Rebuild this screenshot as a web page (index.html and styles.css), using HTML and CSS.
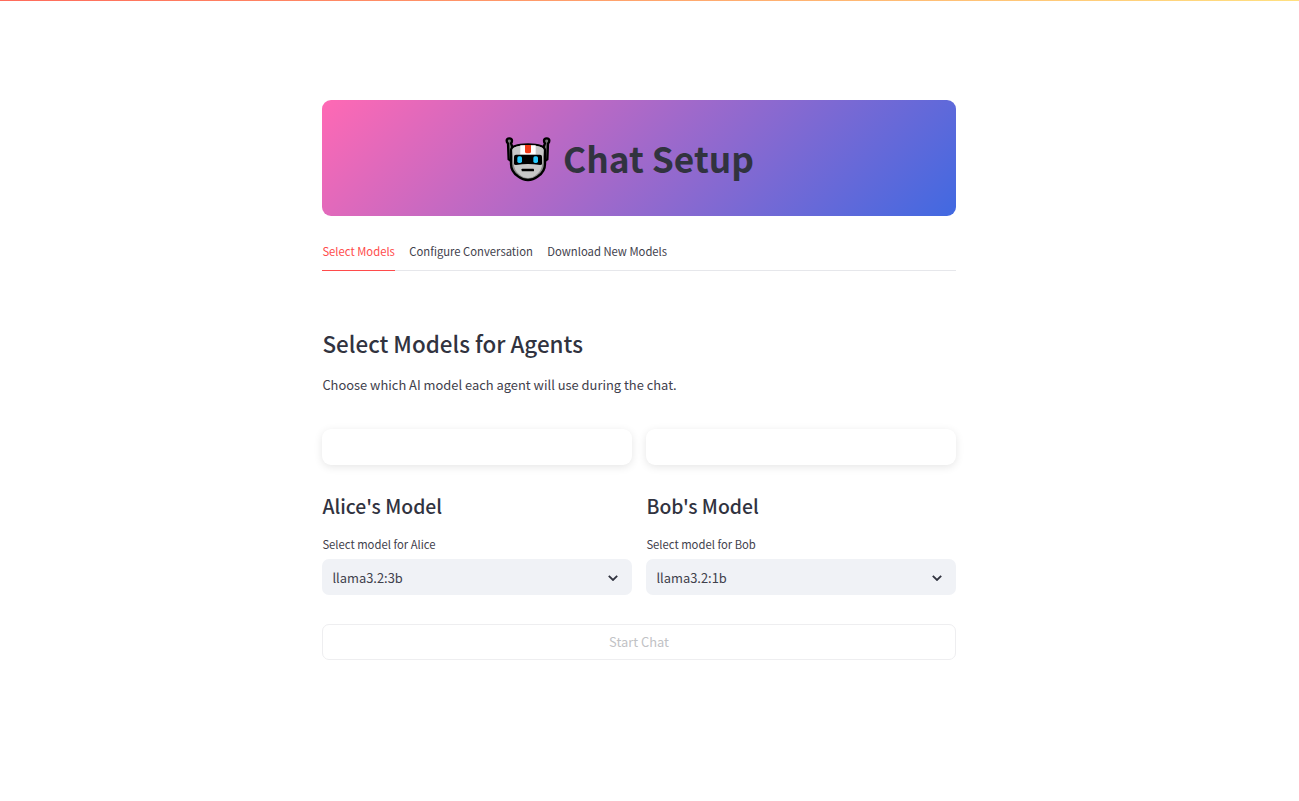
FILE: index.html
```html
<!DOCTYPE html>
<html lang="en">
<head>
<meta charset="utf-8">
<title>Chat Setup</title>
<link rel="stylesheet" href="styles.css">
</head>
<body>
<div class="decoration"></div>
<main class="page">
  <header class="hero">
    <svg class="robot" viewBox="0 0 150 150" aria-hidden="true">
      <path d="M19 13Q27 13 27 20Q27 25 24 28L32 48V86L17 76L15 28Q11 25 11 20Q11 13 19 13Z" fill="#777" stroke="#000" stroke-width="7" stroke-linejoin="round"/>
      <path d="M131 13Q123 13 123 20Q123 25 126 28L118 48V86L133 76L135 28Q139 25 139 20Q139 13 131 13Z" fill="#777" stroke="#000" stroke-width="7" stroke-linejoin="round"/>
      <path d="M24 48Q26 31 75 31Q124 31 126 48V90Q126 113 105 127Q90 138 75 138Q60 138 45 127Q24 113 24 90Z" fill="#8c8c8c" stroke="#000" stroke-width="7"/>
      <path d="M28 49Q30 34 75 34Q120 34 122 49L118 89Q116 109 103 119Q89 132 75 132Q61 132 47 119Q34 109 32 89Z" fill="#c8c8c8"/>
      <path d="M52 34H98V62H52Z" fill="#fff"/>
      <path d="M66 33H84V53Q84 58 75 58T66 53Z" fill="#f03a17"/>
      <path d="M39 62H111Q117 62 117 68V89Q117 93 111 93Q75 87 39 93Q33 93 33 89V68Q33 62 39 62Z" fill="#000"/>
      <rect x="43" y="67" width="14" height="20" rx="5" fill="#26c9fc"/>
      <rect x="91" y="67" width="14" height="20" rx="5" fill="#26c9fc"/>
      <rect x="56" y="104" width="37" height="8" rx="2" fill="#000"/>
    </svg>
    <h1 class="hero-title">Chat Setup</h1>
  </header>
  <nav class="tabs">
    <a class="tab tab-active">Select Models</a>
    <a class="tab">Configure Conversation</a>
    <a class="tab">Download New Models</a>
  </nav>
  <h2 class="section-title">Select Models for Agents</h2>
  <p class="intro">Choose which AI model each agent will use during the chat.</p>
  <div class="agents">
    <section class="agent">
      <div class="card"></div>
      <h3 class="agent-title">Alice's Model</h3>
      <div class="label">Select model for Alice</div>
      <div class="select"><span>llama3.2:3b</span>
        <svg class="chevron" viewBox="0 0 10 6"><path d="M.8 .8L5 5L9.200 .8"/></svg></div>
    </section>
    <section class="agent">
      <div class="card"></div>
      <h3 class="agent-title">Bob's Model</h3>
      <div class="label">Select model for Bob</div>
      <div class="select"><span>llama3.2:1b</span>
        <svg class="chevron" viewBox="0 0 10 6"><path d="M.8 .8L5 5L9.200 .8"/></svg></div>
    </section>
  </div>
  <button class="start" disabled>Start Chat</button>
</main>
</body>
</html>
```
FILE: styles.css
```css
* { box-sizing: border-box; }
body {
  margin: 0;
  background: #fff;
  color: #3f414c;
  font-family: "Noto Sans CJK SC", "Noto Sans", sans-serif;
  font-size: 12.9px;
}
h1, h2, h3, p { margin: 0; }
h1, h2, h3 { color: #31333f; }
.decoration { height: 1px; background: linear-gradient(90deg, #ff6b5b, #ffe080); }
.page { width: 634px; margin: 99px 0 0 322px; }
.hero {
  height: 116px;
  border-radius: 9px;
  background: linear-gradient(135deg, #ff69b4, #4169e1);
  display: flex;
  align-items: center;
  padding: 0 0 0 181px;
  gap: 10px;
}
.robot { width: 50px; height: 50px; flex: none; margin-top: 2px; }
.hero-title { font-size: 35.3px; font-weight: 700; line-height: 48px; white-space: nowrap; }
.tabs {
  display: flex;
  gap: 14.4px;
  height: 36px;
  margin-top: 19px;
  border-bottom: 1px solid #e6e7eb;
}
.tab { font-size: 11.27px; line-height: 32px; height: 36px; white-space: nowrap; padding-left: 0.4px; }
.tab + .tab { padding-left: 0; }
.tab-active { color: #ff4b4b; border-bottom: 1px solid #ff4b4b; }
.section-title { margin-top: 57px; padding-left: 0.5px; font-size: 22.4px; line-height: 30px; font-weight: 500; }
.intro { margin-top: 15px; padding-left: 0.4px; line-height: 23px; }
.agents { display: grid; grid-template-columns: 310px 310px; gap: 14px; margin-top: 33px; }
.card { height: 36px; border-radius: 9px; background: #fff; box-shadow: 0 2px 9px rgba(0, 0, 0, .1); }
.agent-title { margin-top: 27px; padding-left: 0.5px; font-size: 19.34px; line-height: 28px; font-weight: 500; }
.label { margin-top: 14px; padding-left: 0.4px; font-size: 11.28px; line-height: 20px; }
.select {
  height: 36px;
  margin-top: 5px;
  padding: 0 14px 0 10.4px;
  border-radius: 7px;
  background: #f0f2f6;
  display: flex;
  align-items: center;
  justify-content: space-between;
}
.chevron { width: 10px; height: 6px; margin-top: 1px; fill: none; stroke: #31333f; stroke-width: 1.8; }
.start {
  display: block;
  width: 100%;
  height: 36px;
  margin-top: 29px;
  padding: 0 0 2px;
  border: 1px solid #eeeef0;
  border-radius: 7px;
  background: #fff;
  color: #c1c2c5;
  font: inherit;
}
```
